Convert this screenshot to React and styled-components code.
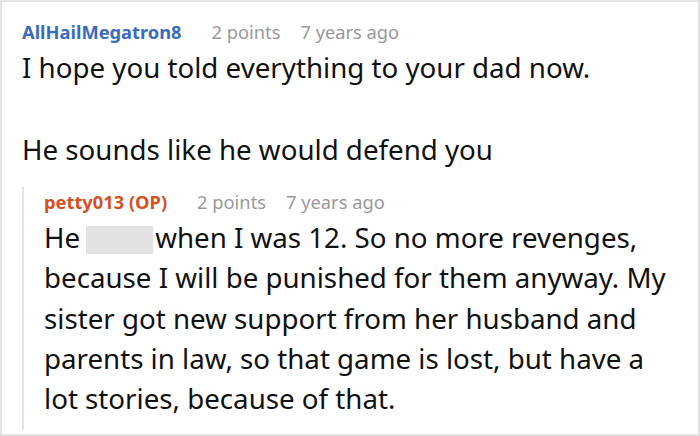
import React from 'react';
import styled, { createGlobalStyle } from 'styled-components';

const Global = createGlobalStyle`
  html, body {
    margin: 0;
    padding: 0;
    background: #fff;
  }
  body {
    font-family: "Noto Sans", "Open Sans", sans-serif;
  }
`;

const Frame = styled.div`
  box-sizing: border-box;
  width: 700px;
  height: 436px;
  border: 2px solid #e3e3e3;
  padding: 15px 22px 0 20px;
  overflow: hidden;
`;

const Meta = styled.div`
  display: flex;
  align-items: baseline;
  gap: 20px;
  font-size: 18.3px;
  line-height: 30px;
`;

const Author = styled.span`
  font-weight: 700;
  color: ${(p) => (p.$op ? '#d4521f' : '#3c6cbd')};
  margin-right: 10px;
`;

const Muted = styled.span`
  color: #999;
`;

const Body = styled.div`
  font-size: 27.7px;
  line-height: 41px;
  color: #111;
`;

const Para = styled.p`
  margin: 0 0 41px;
  &:last-child {
    margin-bottom: 0;
  }
`;

const Reply = styled.div`
  margin-top: 17px;
  border-left: 2px solid #e3e3e3;
  padding-left: 20px;
  padding-bottom: 12px;
`;

const Redacted = styled.span`
  display: inline-block;
  width: 67px;
  height: 28px;
  margin: 0 2px 0 6px;
  background: #e2e2e2;
  vertical-align: -6px;
`;

const ReplyBody = styled(Body)`
  line-height: 40.25px;
`;

const Comment = ({ name, op, children }) => (
  <>
    <Meta>
      <Author $op={op}>{name}</Author>
      <Muted>2 points</Muted>
      <Muted>7 years ago</Muted>
    </Meta>
    {children}
  </>
);

export default function App() {
  return (
    <>
      <Global />
      <Frame>
        <Comment name="AllHailMegatron8">
          <Body>
            <Para>I hope you told everything to your dad now.</Para>
            <Para>He sounds like he would defend you</Para>
          </Body>
        </Comment>
        <Reply>
          <Comment name="petty013 (OP)" op>
            <ReplyBody>
              He<Redacted />when I was 12. So no more revenges, because I will be punished for them
              anyway. My sister got new support from her husband and parents in law, so that game is
              lost, but have a lot stories, because of that.
            </ReplyBody>
          </Comment>
        </Reply>
      </Frame>
    </>
  );
}
